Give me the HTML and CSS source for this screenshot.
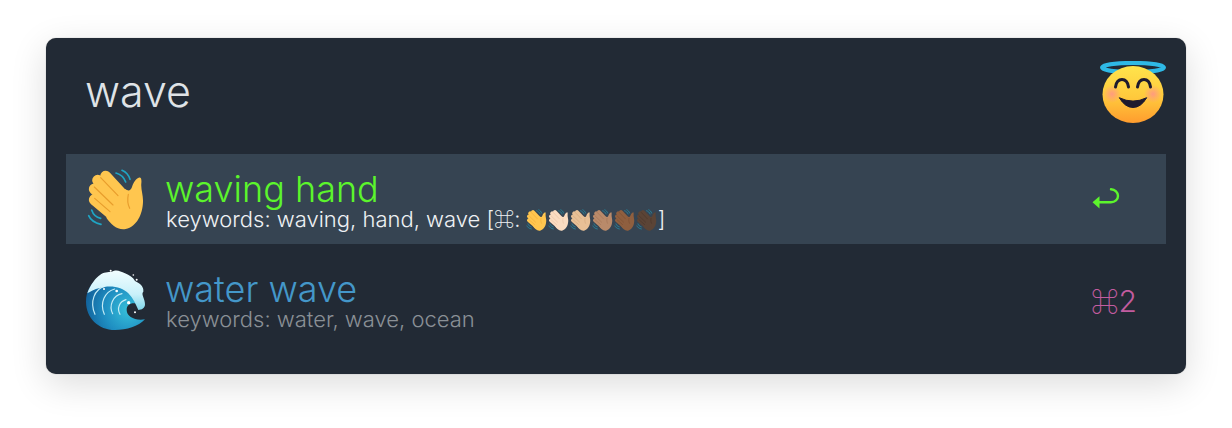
FILE: index.html
```html
<!DOCTYPE html>
<html lang="en">
<head>
<meta charset="utf-8">
<title>Emoji search</title>
<link rel="stylesheet" href="styles.css">
</head>
<body>
<svg class="defs" width="0" height="0" aria-hidden="true">
  <defs>
    <linearGradient id="face" x1="0" y1="0" x2="0" y2="1">
      <stop offset="0" stop-color="#ffe44c"/>
      <stop offset="0.55" stop-color="#ffc93c"/>
      <stop offset="1" stop-color="#ff9c2e"/>
    </linearGradient>
    <radialGradient id="blush">
      <stop offset="0" stop-color="#ff8f8f" stop-opacity="0.8"/>
      <stop offset="1" stop-color="#ff8f8f" stop-opacity="0"/>
    </radialGradient>
    <radialGradient id="sea" gradientUnits="userSpaceOnUse" cx="175" cy="165" r="130">
      <stop offset="0" stop-color="#37c0da"/>
      <stop offset="0.55" stop-color="#1f8fc2"/>
      <stop offset="1" stop-color="#12629c"/>
    </radialGradient>
    <linearGradient id="foam" x1="0" y1="0" x2="0" y2="1">
      <stop offset="0" stop-color="#f2fdff"/>
      <stop offset="0.6" stop-color="#c9f1fa"/>
      <stop offset="1" stop-color="#7fd6ea"/>
    </linearGradient>
    <symbol id="hand" viewBox="78 55 186 186">
      <g fill="none" stroke="#1fa5c4" stroke-width="5" stroke-linecap="round">
        <path d="M168 70c14 4 24 13 29 27"/>
        <path d="M186 62c12 5 20 14 24 27"/>
        <path d="M95 181c4 13 13 22 27 25"/>
        <path d="M86 198c5 12 15 21 37 26"/>
      </g>
      <g fill="none" stroke="var(--skin)" stroke-width="33" stroke-linecap="round">
        <path d="M137 80l60 65"/>
        <path d="M113 92l74 76"/>
        <path d="M103 118l72 68"/>
        <path d="M103 150l62 52"/>
      </g>
      <path d="M196 118c10 8 16 4 20-6 3-10 8-22 20-28 8-3 9 6 8 17-2 18 6 36 5 56-1 36-18 74-52 81-26 4-44-14-58-34l25-60z" fill="var(--skin)"/>
      <path d="M122 84l52 54M103 112l56 54M104 146l46 40M205 134c-3 14-3 28 4 42" fill="none" stroke="var(--skin-line)" stroke-width="3.500" stroke-linecap="round"/>
    </symbol>
  </defs>
</svg>
<main class="window">
  <header class="search">
    <div class="query">wave</div>
    <svg class="emoji-lg" viewBox="0 0 66 62" aria-hidden="true">
      <ellipse cx="33" cy="6.500" rx="31" ry="4.600" fill="none" stroke="#2fb9e6" stroke-width="4"/>
      <ellipse cx="33" cy="33.500" rx="30.500" ry="28.500" fill="url(#face)"/>
      <circle cx="12" cy="33" r="9" fill="url(#blush)"/>
      <circle cx="53" cy="33" r="9" fill="url(#blush)"/>
      <path d="M15.500 26c1.500-10 11.500-10 13 0M37.500 26c1.500-10 11.500-10 13 0" fill="none" stroke="#1e1a2e" stroke-width="3" stroke-linecap="round"/>
      <path d="M19.300 36.700Q33 43.500 46.700 36.700Q41 46.500 33 46.500Q25 46.500 19.300 36.700z" fill="#1e1a2e" stroke="#1e1a2e" stroke-width="1" stroke-linejoin="round"/>
    </svg>
  </header>

  <section class="row row-active">
    <svg class="emoji-md skin-0" aria-hidden="true"><use href="#hand"/></svg>
    <div class="copy">
      <div class="title title-active">waving hand</div>
      <div class="sub sub-active">keywords: waving, hand, wave [<span class="cmd">⌘</span>:
        <span class="skins"><svg class="emoji-sm skin-0" aria-hidden="true"><use href="#hand"/></svg><svg class="emoji-sm skin-1" aria-hidden="true"><use href="#hand"/></svg><svg class="emoji-sm skin-2" aria-hidden="true"><use href="#hand"/></svg><svg class="emoji-sm skin-3" aria-hidden="true"><use href="#hand"/></svg><svg class="emoji-sm skin-4" aria-hidden="true"><use href="#hand"/></svg><svg class="emoji-sm skin-5" aria-hidden="true"><use href="#hand"/></svg></span>]</div>
    </div>
    <div class="shortcut">
      <svg class="enter" viewBox="0 0 28 22" aria-hidden="true">
        <path d="M7 14.200h12c4 0 7-2.800 7-6.300S23 1.500 19 1.300" fill="none" stroke="#5cf52c" stroke-width="2.400" stroke-linecap="round"/>
        <path d="M0.500 14.300L7.500 8.200v12.300z" fill="#5cf52c"/>
      </svg>
    </div>
  </section>

  <section class="row">
    <svg class="emoji-md" viewBox="48 39 186 186" aria-hidden="true">
      <path d="M225 193C205 215 170 225 135 225C85 225 48 188 48 140C48 110 62 85 85 70L180 70L210 150C190 140 170 145 170 165C170 185 195 198 225 193z" fill="url(#sea)"/>
      <g fill="none" stroke="#c4ecf6" stroke-width="3.500" stroke-linecap="round">
        <path d="M75 178C58 140 74 102 104 94"/>
        <path d="M103 178C88 145 104 110 134 102"/>
        <path d="M128 176C116 152 128 122 156 116"/>
        <path d="M150 178C140 160 148 140 168 134"/>
      </g>
      <path d="M52 115C60 90 80 65 90 60C100 50 115 52 125 50C140 42 150 48 165 55C178 60 190 68 195 78C210 85 222 95 220 110C212 118 225 130 225 148C225 160 215 165 205 165C198 150 190 130 175 115C150 90 100 85 52 115z" fill="url(#foam)"/>
      <g fill="#fff">
        <circle cx="122" cy="47" r="3"/>
        <circle cx="190" cy="60" r="2.500"/>
        <circle cx="200" cy="74" r="3"/>
        <circle cx="176" cy="143" r="5"/>
        <circle cx="195" cy="172" r="3"/>
        <circle cx="140" cy="108" r="4"/>
        <circle cx="102" cy="102" r="3"/>
      </g>
    </svg>
    <div class="copy">
      <div class="title title-idle">water wave</div>
      <div class="sub sub-idle">keywords: water, wave, ocean</div>
    </div>
    <div class="shortcut shortcut-key"><span class="cmd">⌘</span>2</div>
  </section>
</main>
</body>
</html>
```

FILE: styles.css
```css
* { box-sizing: border-box; }

html, body {
  margin: 0;
  height: 100%;
  background: #ffffff;
  overflow: hidden;
}

body {
  padding: 38px 46px 0;
  font-family: Inter, "Liberation Sans", sans-serif;
}

.defs { position: absolute; }

.window {
  width: 1140px;
  height: 336px;
  padding: 20px;
  background: #222a35;
  border-radius: 10px;
  box-shadow: 0 0 1px rgba(0, 0, 0, 0.45), 0 10px 36px rgba(0, 0, 0, 0.14);
}

.search {
  display: flex;
  align-items: center;
  justify-content: space-between;
  height: 66px;
  margin-bottom: 30px;
  padding-left: 20px;
}

.query {
  font-size: 43px;
  font-weight: 300;
  line-height: 70px;
  color: #dfe3e7;
  margin-left: -1px;
}

.emoji-lg {
  display: block;
  width: 66px;
  height: 62px;
  flex: none;
  margin-top: 2px;
}

.row {
  display: flex;
  align-items: center;
  height: 90px;
  margin-bottom: 10px;
  padding: 0 20px;
}

.row-active { background: #364452; }

.emoji-md {
  display: block;
  flex: none;
  width: 62px;
  height: 62px;
  margin-right: 18px;
}

.copy {
  flex: 1;
  min-width: 0;
  padding: 4px 0 2px;
}

.title {
  font-size: 36px;
  font-weight: 300;
  line-height: 38px;
  margin-left: -1px;
}

.title-active { color: #5cf52c; }
.title-idle { color: #4497c9; }

.sub {
  font-size: 22px;
  font-weight: 300;
  line-height: 22px;
}

.sub-active { color: #eef1f4; }
.sub-idle { color: #8a9096; }

.cmd {
  font-family: "Noto Sans CJK JP", "DejaVu Sans", sans-serif;
  font-size: 0.92em;
  line-height: 1;
}

.skins {
  display: inline-flex;
  vertical-align: -4px;
  margin-left: -1px;
}

.emoji-sm {
  display: block;
  width: 22px;
  height: 22px;
}

.skin-0 { --skin: #ffc64f; --skin-line: #e89d2c; }
.skin-1 { --skin: #fbdcc1; --skin-line: #e0b594; }
.skin-2 { --skin: #e8c096; --skin-line: #c79a6e; }
.skin-3 { --skin: #b98a6a; --skin-line: #96684a; }
.skin-4 { --skin: #8f5f3f; --skin-line: #6e4529; }
.skin-5 { --skin: #5b4436; --skin-line: #3f2d22; }

.shortcut {
  display: flex;
  justify-content: center;
  flex: none;
  width: 66px;
  margin-right: -1px;
}

.shortcut-key {
  align-items: baseline;
  font-size: 30px;
  font-weight: 300;
  color: #c25c9f;
  line-height: 40px;
  padding-top: 4px;
}

.enter {
  display: block;
  width: 28px;
  height: 22px;
  margin-left: -16px;
}
```
